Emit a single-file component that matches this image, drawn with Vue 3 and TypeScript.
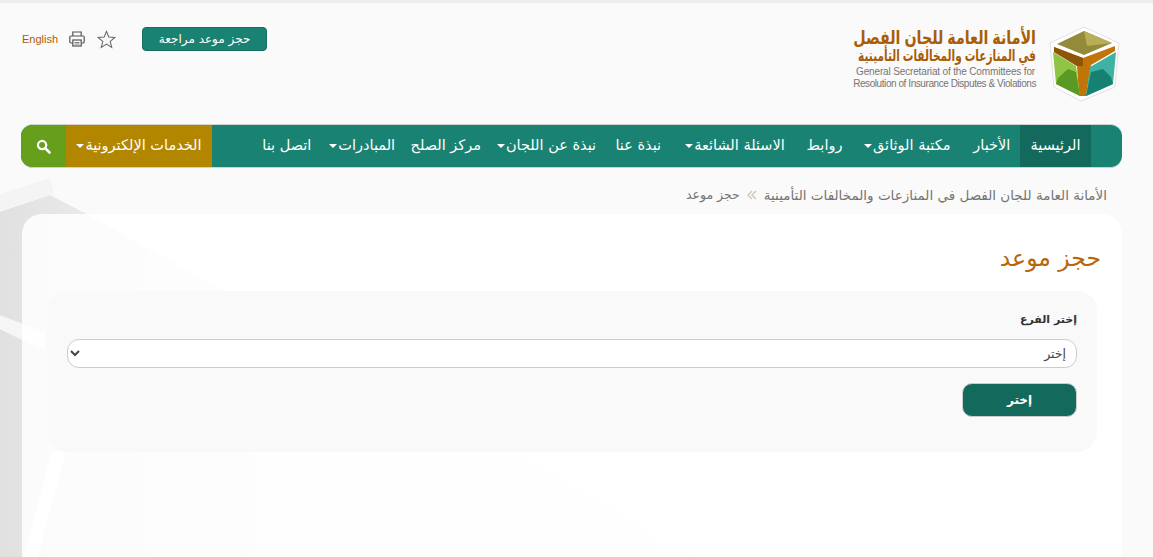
<script setup lang="ts">
interface NavItem {
  label: string;
  width: number;
  dropdown?: boolean;
  active?: boolean;
}

const navItems: NavItem[] = [
  { label: "الرئيسية", width: 71, active: true },
  { label: "الأخبار", width: 56.5 },
  { label: "مكتبة الوثائق", width: 112.5, dropdown: true },
  { label: "روابط", width: 53 },
  { label: "الاسئلة الشائعة", width: 126, dropdown: true },
  { label: "نبذة عنا", width: 67.5 },
  { label: "نبذة عن اللجان", width: 116, dropdown: true },
  { label: "مركز الصلح", width: 85.5 },
  { label: "المبادرات", width: 81.5, dropdown: true },
  { label: "اتصل بنا", width: 69.5 }
];
</script>

<template>
  <div class="page" dir="rtl">
    <svg class="backdrop" viewBox="0 0 1153 557" preserveAspectRatio="none" aria-hidden="true">
      <defs>
        <linearGradient id="fade" x1="0" y1="0" x2="1" y2="0">
          <stop offset="0" stop-color="#e0e0e0" />
          <stop offset="0.1" stop-color="#e8e8e8" />
          <stop offset="0.45" stop-color="#f6f6f6" />
          <stop offset="1" stop-color="#fafafa" />
        </linearGradient>
      </defs>
      <polygon points="0,210 50,193 88,213 700,557 0,557" fill="url(#fade)" />
      <polygon points="0,192 50,176 54,192 0,209" fill="#f4f4f4" />
      <polygon points="0,314 45,331 45,350 0,328" fill="#f6f6f6" />
      <polygon points="52,450 66,450 38,557 24,557" fill="#ffffff" opacity="0.8" />
    </svg>

    <header class="top">
      <div class="brand">
        <svg class="logo" viewBox="0 0 90 90" aria-hidden="true">
          <polygon points="45,5 80,21 76,65 42,79 15,65 11,21" fill="#fff" stroke="#e2e2e2" stroke-width="1" stroke-linejoin="round" />
          <polygon points="45,9 73,21 45,33 18,22" fill="#938a3a" />
          <polygon points="45,9 73,21 48,24" fill="#b9ad58" />
          <polygon points="15,25 44,36 76,24 76,29 52,43 47,74 40,74 38,44 15,30" fill="#c17408" />
          <polygon points="15,25 44,36 44,44 38,44 15,30" fill="#8e5408" />
          <polygon points="14,30 37,44 41,74 17,62" fill="#8fc444" />
          <polygon points="19,56 29,47 37,50 41,74 17,62" fill="#5a9a24" />
          <polygon points="77,30 51,45 47,74 74,62" fill="#3fb3a3" />
          <polygon points="52,50 64,47 72,55 74,62 47,74" fill="#168173" />
        </svg>
        <div class="brand-text">
          <div class="brand-ar one">الأمانة العامة للجان الفصل</div>
          <div class="brand-ar two">في المنازعات والمخالفات التأمينية</div>
          <div class="brand-en first" dir="ltr">General Secretariat of the Committees for</div>
          <div class="brand-en second" dir="ltr">Resolution of Insurance Disputes &amp; Violations</div>
        </div>
      </div>
      <div class="tools">
        <a class="review-btn">حجز موعد مراجعة</a>
        <svg class="star" viewBox="0 0 20 20" aria-hidden="true">
          <polygon points="10,1.5 12.4,7.4 18.8,7.9 13.9,12 15.5,18.3 10,14.9 4.5,18.3 6.1,12 1.2,7.9 7.6,7.4" fill="none" stroke="#666" stroke-width="1.1" />
        </svg>
        <svg class="printer" viewBox="0 0 16 16" aria-hidden="true">
          <path d="M3.8 5V1h8.4v4" fill="none" stroke="#555" stroke-width="1.2" />
          <path d="M3.5 12H2A1.2 1.2 0 0 1 .8 10.8V6.2A1.2 1.2 0 0 1 2 5h12a1.2 1.2 0 0 1 1.2 1.2v4.6A1.2 1.2 0 0 1 14 12h-1.5" fill="none" stroke="#555" stroke-width="1.2" />
          <rect x="3.8" y="9" width="8.4" height="6" fill="none" stroke="#555" stroke-width="1.2" />
          <path d="M5.5 11.5h5M5.5 13h5" stroke="#777" stroke-width="0.9" />
        </svg>
        <a class="lang">English</a>
      </div>
    </header>

    <nav class="nav">
      <ul class="nav-list">
        <li
          v-for="item in navItems"
          :key="item.label"
          class="nav-item"
          :class="{ active: item.active }"
          :style="{ width: item.width + 'px' }"
        >
          {{ item.label }}<span v-if="item.dropdown" class="caret"></span>
        </li>
      </ul>
      <div class="nav-end">
        <div class="nav-services">الخدمات الإلكترونية<span class="caret"></span></div>
        <div class="nav-search">
          <svg viewBox="0 0 16 16" width="15" height="15" aria-hidden="true">
            <circle cx="6.5" cy="6.5" r="4.4" fill="none" stroke="#fff" stroke-width="2.4" />
            <path d="M10 10l4.4 4.4" stroke="#fff" stroke-width="2.8" stroke-linecap="round" />
          </svg>
        </div>
      </div>
    </nav>

    <div class="crumbs">
      <span>الأمانة العامة للجان الفصل في المنازعات والمخالفات التأمينية</span>
      <svg class="crumb-sep" viewBox="0 0 10 10" aria-hidden="true">
        <path d="M5 1L1 5l4 4M9 1L5 5l4 4" fill="none" stroke="#d3c7b8" stroke-width="1.5" />
      </svg>
      <span class="crumb-last">حجز موعد</span>
    </div>

    <main class="card">
      <h1 class="title">حجز موعد</h1>
      <section class="panel">
        <label class="field-label" for="branch">إختر الفرع</label>
        <select id="branch" class="field">
          <option>إختر</option>
        </select>
        <button class="submit" type="button">إختر</button>
      </section>
    </main>
  </div>
</template>

<style>
html,
body {
  margin: 0;
  height: 100%;
  overflow: hidden;
  background: #fafafa;
}
</style>

<style scoped>
.page {
  position: relative;
  height: 557px;
  overflow: hidden;
  box-sizing: border-box;
  border-top: 3px solid #eeeeee;
  background: #fafafa;
  font-family: "DejaVu Sans", "Noto Sans", sans-serif;
}

.backdrop {
  position: absolute;
  inset: 0;
  width: 100%;
  height: 100%;
}

.top {
  position: relative;
  height: 121px;
  box-sizing: border-box;
  padding: 17px 24px 0 22px;
  display: flex;
  justify-content: space-between;
  align-items: flex-start;
}

.brand {
  display: flex;
  align-items: flex-start;
  gap: 3px;
}

.logo {
  width: 90px;
  height: 90px;
  margin-top: 2px;
}

.brand-text {
  padding-top: 8px;
  width: 184px;
  font-family: "Liberation Sans", "DejaVu Sans", sans-serif;
}

.brand-ar {
  color: #a85d06;
  font-weight: 700;
  white-space: nowrap;
  transform-origin: right center;
}

.brand-ar.one {
  font-size: 19px;
  line-height: 19px;
  transform: scaleX(0.75);
}

.brand-ar.two {
  font-size: 16px;
  line-height: 18px;
  transform: scaleX(0.66);
}

.brand-en {
  font-size: 10px;
  line-height: 12px;
  color: #757575;
  white-space: nowrap;
  text-align: right;
}

.brand-en.first {
  margin-top: 1px;
  padding-right: 1px;
  letter-spacing: -0.15px;
}

.brand-en.second {
  letter-spacing: -0.43px;
}

.tools {
  display: flex;
  align-items: center;
  padding-top: 7px;
}

.review-btn {
  width: 125px;
  height: 24px;
  margin-left: 26px;
  border-radius: 4px;
  background: #1a8272;
  border: 1px solid #156f61;
  box-sizing: border-box;
  color: #fff;
  font-size: 12px;
  line-height: 22px;
  text-align: center;
}

.star {
  width: 19px;
  height: 19px;
  margin-left: 12px;
}

.printer {
  width: 16px;
  height: 16px;
  margin-left: 11px;
}

.lang {
  font-family: "Liberation Sans", Arial, sans-serif;
  font-size: 11px;
  color: #a85d06;
}

.nav {
  position: relative;
  height: 44px;
  margin: 0 31px 0 21px;
  box-sizing: border-box;
  border-radius: 12px;
  background: #1a8272;
  border-top: 1px solid #d2d2d2;
  border-bottom: 1px solid #d2d2d2;
  overflow: hidden;
  display: flex;
  justify-content: space-between;
  color: #fff;
  font-size: 14.5px;
}

.nav-list {
  list-style: none;
  margin: 0;
  padding: 0 31px 0 0;
  display: flex;
}

.nav-item {
  line-height: 41px;
  text-align: center;
  white-space: nowrap;
}

.nav-item.active {
  background: #136a5c;
}

.caret {
  display: inline-block;
  margin-right: 1px;
  vertical-align: 2px;
  border-top: 4px solid #fff;
  border-left: 4px solid transparent;
  border-right: 4px solid transparent;
}

.nav-end {
  display: flex;
}

.nav-services {
  width: 146px;
  background: #b38600;
  line-height: 41px;
  text-align: center;
  white-space: nowrap;
}

.nav-search {
  width: 45px;
  background: #659f1c;
  display: flex;
  align-items: center;
  justify-content: center;
}

.crumbs {
  position: relative;
  height: 39px;
  padding: 7px 46px 0 0;
  display: flex;
  align-items: center;
  gap: 7px;
  font-size: 13.5px;
  color: #757575;
}

.crumb-sep {
  width: 10px;
  height: 10px;
}

.crumb-last {
  font-size: 12.5px;
}

.card {
  position: relative;
  height: 400px;
  margin: 0 31px 0 22px;
  box-sizing: border-box;
  padding: 1px 25px 0;
  border-radius: 20px 20px 0 0;
  background: rgba(255, 255, 255, 0.85);
}

.title {
  margin: 26px -4px 15px 0;
  font-size: 23.5px;
  line-height: 35px;
  font-weight: 400;
  color: #b8660a;
}

.panel {
  height: 161px;
  box-sizing: border-box;
  padding: 20px 20px 0;
  border-radius: 20px;
  background: #f9f9f9;
}

.field-label {
  display: block;
  font-size: 11px;
  font-weight: 700;
  color: #333;
  line-height: 18px;
  margin-bottom: 10px;
}

.field {
  display: block;
  width: 100%;
  height: 29px;
  box-sizing: border-box;
  border: 1px solid #cccccc;
  border-radius: 12px;
  background: #fff;
  color: #444;
  font-family: inherit;
  font-size: 12.5px;
  padding: 0 6px;
}

.submit {
  display: block;
  width: 115px;
  height: 34px;
  margin-top: 15px;
  border: 1px solid #cccccc;
  border-radius: 10px;
  background: #136a5c;
  color: #fff;
  font-family: inherit;
  font-size: 12px;
  font-weight: 700;
}
</style>
